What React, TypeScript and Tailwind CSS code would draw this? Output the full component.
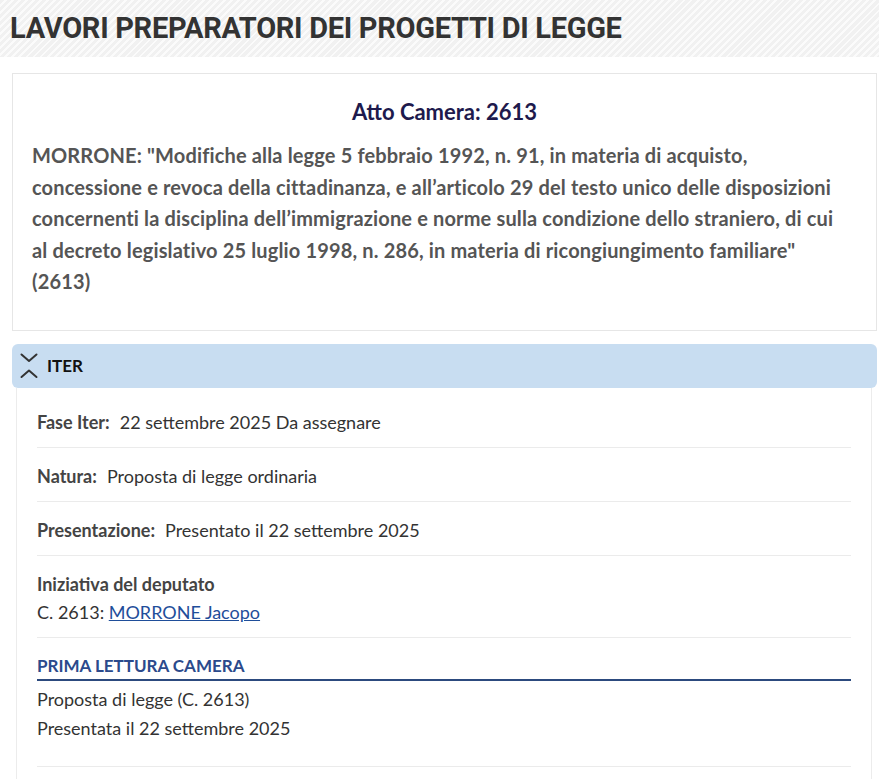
import React from "react";

const body = { fontFamily: "Lato, 'Noto Sans', sans-serif" };

function Row({ label, value }: { label: string; value: string }) {
  return (
    <div className="flex items-center h-[54px] pt-[3px] border-b border-[#ebebeb] text-[18px] text-[#333]">
      <span className="font-bold text-[#444]">{label}</span>
      <span className="ml-[10px]">{value}</span>
    </div>
  );
}

export default function App() {
  return (
    <div className="w-[879px] h-[779px] bg-white overflow-hidden" style={body}>
      <div className="h-[57px] flex items-center pl-[10px] bg-[repeating-linear-gradient(135deg,#f1f1f1_0px,#f1f1f1_3px,#fbfbfb_3px,#fbfbfb_5px)]">
        <h1 className="text-[29px] font-bold text-[#333] tracking-[-0.3px]" style={{ fontFamily: "Roboto, sans-serif" }}>
          LAVORI PREPARATORI DEI PROGETTI DI LEGGE
        </h1>
      </div>
      <div className="ml-[12px] mr-[2px] mt-[16px] border border-[#e6e6e6] h-[258px] px-[19px] pt-[22px]">
        <div className="text-center text-[22px] font-bold text-[#1e1a4d] leading-[32px]">Atto Camera: 2613</div>
        <p className="mt-[12px] text-[20px] font-bold text-[#555] leading-[31.5px] tracking-[0.15px] whitespace-nowrap">
          MORRONE: "Modifiche alla legge 5 febbraio 1992, n. 91, in materia di acquisto,
          <br />
          concessione e revoca della cittadinanza, e all’articolo 29 del testo unico delle disposizioni
          <br />
          concernenti la disciplina dell’immigrazione e norme sulla condizione dello straniero, di cui
          <br />
          al decreto legislativo 25 luglio 1998, n. 286, in materia di ricongiungimento familiare"
          <br />
          (2613)
        </p>
      </div>
      <div className="ml-[12px] mr-[2px] mt-[13px] h-[44px] bg-[#c8ddf1] rounded-[6px] flex items-center pl-[8px]">
        <svg width="18" height="28" viewBox="0 0 18 28" fill="none" stroke="#333" strokeWidth="2" strokeLinecap="round" strokeLinejoin="round">
          <path d="M1.5 2.5 L9 9 L16.5 2.5" />
          <path d="M1.5 25 L9 18.5 L16.5 25" />
        </svg>
        <span className="ml-[9px] text-[17px] font-bold text-[#111]">ITER</span>
      </div>
      <div className="ml-[16px] mr-[7px] border-l border-r border-[#ececec] h-[400px] px-[20px] pt-[6px]">
        <Row label="Fase Iter:" value="22 settembre 2025 Da assegnare" />
        <Row label="Natura:" value="Proposta di legge ordinaria" />
        <Row label="Presentazione:" value="Presentato il 22 settembre 2025" />
        <div className="h-[82px] border-b border-[#ebebeb] pt-[14px] text-[18px] leading-[28px] text-[#333]">
          <div className="font-bold text-[#444]">Iniziativa del deputato</div>
          <div>
            C. 2613: <a className="text-[#1f4e9a] underline" href="#">MORRONE Jacopo</a>
          </div>
        </div>
        <div className="h-[129px] border-b border-[#ebebeb] pt-[16px]">
          <div className="text-[17px] font-bold text-[#2b4a8c] leading-[24px] border-b-2 border-[#2c4a7e] pb-[1px]">PRIMA LETTURA CAMERA</div>
          <div className="text-[18px] text-[#333] leading-[29px] pt-[4px]">
            <div>Proposta di legge (C. 2613)</div>
            <div>Presentata il 22 settembre 2025</div>
          </div>
        </div>
      </div>
    </div>
  );
}
